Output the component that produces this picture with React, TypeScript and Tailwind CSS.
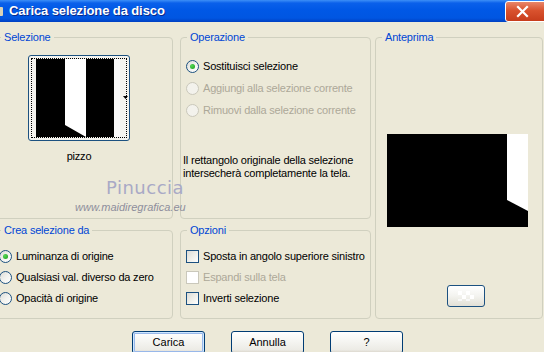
import React from 'react';

function Radio({ checked = false, disabled = false }: { checked?: boolean; disabled?: boolean }) {
  return (
    <span
      className={`w-[13px] h-[13px] shrink-0 rounded-full border flex items-center justify-center ${
        disabled
          ? 'border-[#cac8bb] bg-[#f3f2ec]'
          : 'border-[#1c5180] bg-[linear-gradient(135deg,#dcdcd7_0%,#f2f2ee_50%,#ffffff_100%)]'
      }`}
    >
      {checked && <span className="w-[5px] h-[5px] rounded-full bg-[radial-gradient(circle_at_35%_35%,#55d855,#1a9b1a)]" />}
    </span>
  );
}

function Check({ disabled = false }: { disabled?: boolean }) {
  return (
    <span
      className={`w-[13px] h-[13px] shrink-0 border ${
        disabled
          ? 'border-[#cac8bb] bg-white'
          : 'border-[#1c5180] bg-[linear-gradient(135deg,#dcdcd7_0%,#f0f0ea_55%,#ffffff_100%)]'
      }`}
    />
  );
}

function Group({ title, className, children }: { title: string; className: string; children?: React.ReactNode }) {
  return (
    <fieldset className={`border border-[#d0d0bf] rounded-[4px] p-0 m-0 min-w-0 ${className}`}>
      <legend className="ml-[6px] px-[3px] leading-[13px] text-[#0046d5]">{title}</legend>
      {children}
    </fieldset>
  );
}

function XpButton({ label, primary = false }: { label: string; primary?: boolean }) {
  return (
    <div
      className={`w-[73px] h-[23px] rounded-[3px] border border-[#003c74] bg-[linear-gradient(180deg,#ffffff_0%,#f6f6f3_40%,#ecebe5_85%,#d6d0c5_100%)] flex items-center justify-center text-black ${
        primary ? 'shadow-[inset_0_0_0_1px_#cee7ff,inset_0_0_0_2px_#98b8ea]' : ''
      }`}
    >
      {label}
    </div>
  );
}

export default function App() {
  const crea = ['Luminanza di origine', 'Qualsiasi val. diverso da zero', 'Opacità di origine'];

  return (
    <div className="relative w-[544px] h-[352px] overflow-hidden bg-[#ece9d8] font-['Liberation_Sans',Arial,sans-serif] text-[11px] tracking-[-0.2px] whitespace-nowrap text-black">
      {/* title bar */}
      <div className="h-[22px] flex items-center bg-[linear-gradient(180deg,#3d8ff7_0%,#0a60ea_14%,#0058e6_45%,#0056e2_82%,#0040c2_100%)]">
        <span className="w-[3px] h-[9px] ml-0 bg-[#d9d2b6] rounded-r-[1px]" />
        <span className="ml-[6px] text-white font-bold text-[13px] tracking-[-0.1px] [text-shadow:1px_1px_0_#0a2a8a]">
          Carica selezione da disco
        </span>
        <div className="ml-auto mr-[-18px] w-[57px] h-[21px] rounded-[3px] border border-white bg-[linear-gradient(180deg,#e8866a_0%,#d9522e_45%,#c73d1c_100%)] flex items-center pl-[10px]">
          <svg width="13" height="13" viewBox="0 0 13 13">
            <path d="M2 2 L11 11 M11 2 L2 11" stroke="white" strokeWidth="2.2" strokeLinecap="square" />
          </svg>
        </div>
      </div>

      <div className="flex ml-[-6px] pt-[9px]">
        {/* column 1 */}
        <div className="flex flex-col w-[179px]">
          <Group title="Selezione" className="h-[188px]">
            <div className="ml-[33px] mt-[11px] w-[102px] h-[86px] rounded-[3px] border border-[#1c5180] bg-[#f5f4ef] p-[2px]">
              <div className="relative h-full border border-dotted border-black flex items-start">
                <svg width="84" height="78" viewBox="0 0 84 78" className="ml-[4px]">
                  <rect width="78" height="78" fill="black" />
                  <rect x="78" width="6" height="78" fill="#fafafa" />
                  <polygon points="29,0 50,0 50,78 29,66" fill="white" />
                </svg>
                <svg width="5" height="3" viewBox="0 0 5 3" className="absolute left-[91px] top-[37px]">
                  <polygon points="0,0 5,0 2.5,3" fill="black" />
                </svg>
              </div>
            </div>
            <div className="ml-[33px] w-[102px] mt-[9px] text-center leading-[13px]">pizzo</div>
          </Group>
          <Group title="Crea selezione da" className="h-[95px] mt-[5px]">
            <div className="mt-[13px] pl-[4px] flex flex-col gap-[8px]">
              {crea.map((t, i) => (
                <div key={t} className="flex items-center gap-[4px] h-[13px]">
                  <Radio checked={i === 0} />
                  <span>{t}</span>
                </div>
              ))}
            </div>
          </Group>
        </div>

        {/* column 2 */}
        <div className="flex flex-col w-[191px] ml-[7px]">
          <Group title="Operazione" className="h-[188px]">
            <div className="mt-[16px] pl-[5px] flex flex-col gap-[9px]">
              <div className="flex items-center gap-[4px] h-[13px]">
                <Radio checked />
                <span>Sostituisci selezione</span>
              </div>
              <div className="flex items-center gap-[4px] h-[13px] text-[#aca899]">
                <Radio disabled />
                <span>Aggiungi alla selezione corrente</span>
              </div>
              <div className="flex items-center gap-[4px] h-[13px] text-[#aca899]">
                <Radio disabled />
                <span>Rimuovi dalla selezione corrente</span>
              </div>
            </div>
            <p className="mt-[37px] pl-[2px] leading-[13px]">
              Il rettangolo originale della selezione
              <br />
              intersecherà completamente la tela.
            </p>
          </Group>
          <Group title="Opzioni" className="h-[95px] mt-[5px]">
            <div className="mt-[13px] pl-[5px] flex flex-col gap-[8px]">
              <div className="flex items-center gap-[4px] h-[13px]">
                <Check />
                <span>Sposta in angolo superiore sinistro</span>
              </div>
              <div className="flex items-center gap-[4px] h-[13px] text-[#aca899]">
                <Check disabled />
                <span>Espandi sulla tela</span>
              </div>
              <div className="flex items-center gap-[4px] h-[13px]">
                <Check />
                <span>Inverti selezione</span>
              </div>
            </div>
          </Group>
        </div>

        {/* column 3 */}
        <div className="w-[168px] ml-[4px]">
          <Group title="Anteprima" className="h-[288px]">
            <svg width="141" height="93" viewBox="0 0 141 93" className="ml-[11px] mt-[90px] block">
              <rect width="141" height="93" fill="black" />
              <polygon points="120,0 141,0 141,77 120,66" fill="white" />
            </svg>
            <div className="ml-[71px] mt-[58px] w-[38px] h-[22px] rounded-[3px] border border-[#1c5180] bg-[linear-gradient(180deg,#ffffff_0%,#f3f3ef_50%,#e2e0d6_100%)] flex items-center justify-center">
              <svg width="16" height="10" viewBox="0 0 16 10">
                <rect x="0" y="0" width="4" height="4" fill="#ffffff" />
                <rect x="8" y="0" width="4" height="4" fill="#ffffff" />
                <rect x="4" y="4" width="4" height="4" fill="#ffffff" />
                <rect x="12" y="4" width="4" height="4" fill="#ffffff" />
                <rect x="0" y="8" width="4" height="2" fill="#f8f8f8" />
                <rect x="8" y="8" width="4" height="2" fill="#f8f8f8" />
              </svg>
            </div>
          </Group>
        </div>
      </div>

      {/* buttons */}
      <div className="flex gap-[26px] pl-[132px] mt-[12px] tracking-normal">
        <XpButton label="Carica" primary />
        <XpButton label="Annulla" />
        <XpButton label="?" />
      </div>

      {/* watermark */}
      <div className="absolute left-[106px] top-[179px] font-['DejaVu_Sans',sans-serif] text-[18px] leading-none tracking-[0.5px] text-[#a9a9c6] pointer-events-none">
        Pinuccia
      </div>
      <div className="absolute left-[75px] top-[202px] italic text-[11px] leading-none tracking-normal text-[#8e8e9c] pointer-events-none">
        www.maidiregrafica.eu
      </div>
    </div>
  );
}
